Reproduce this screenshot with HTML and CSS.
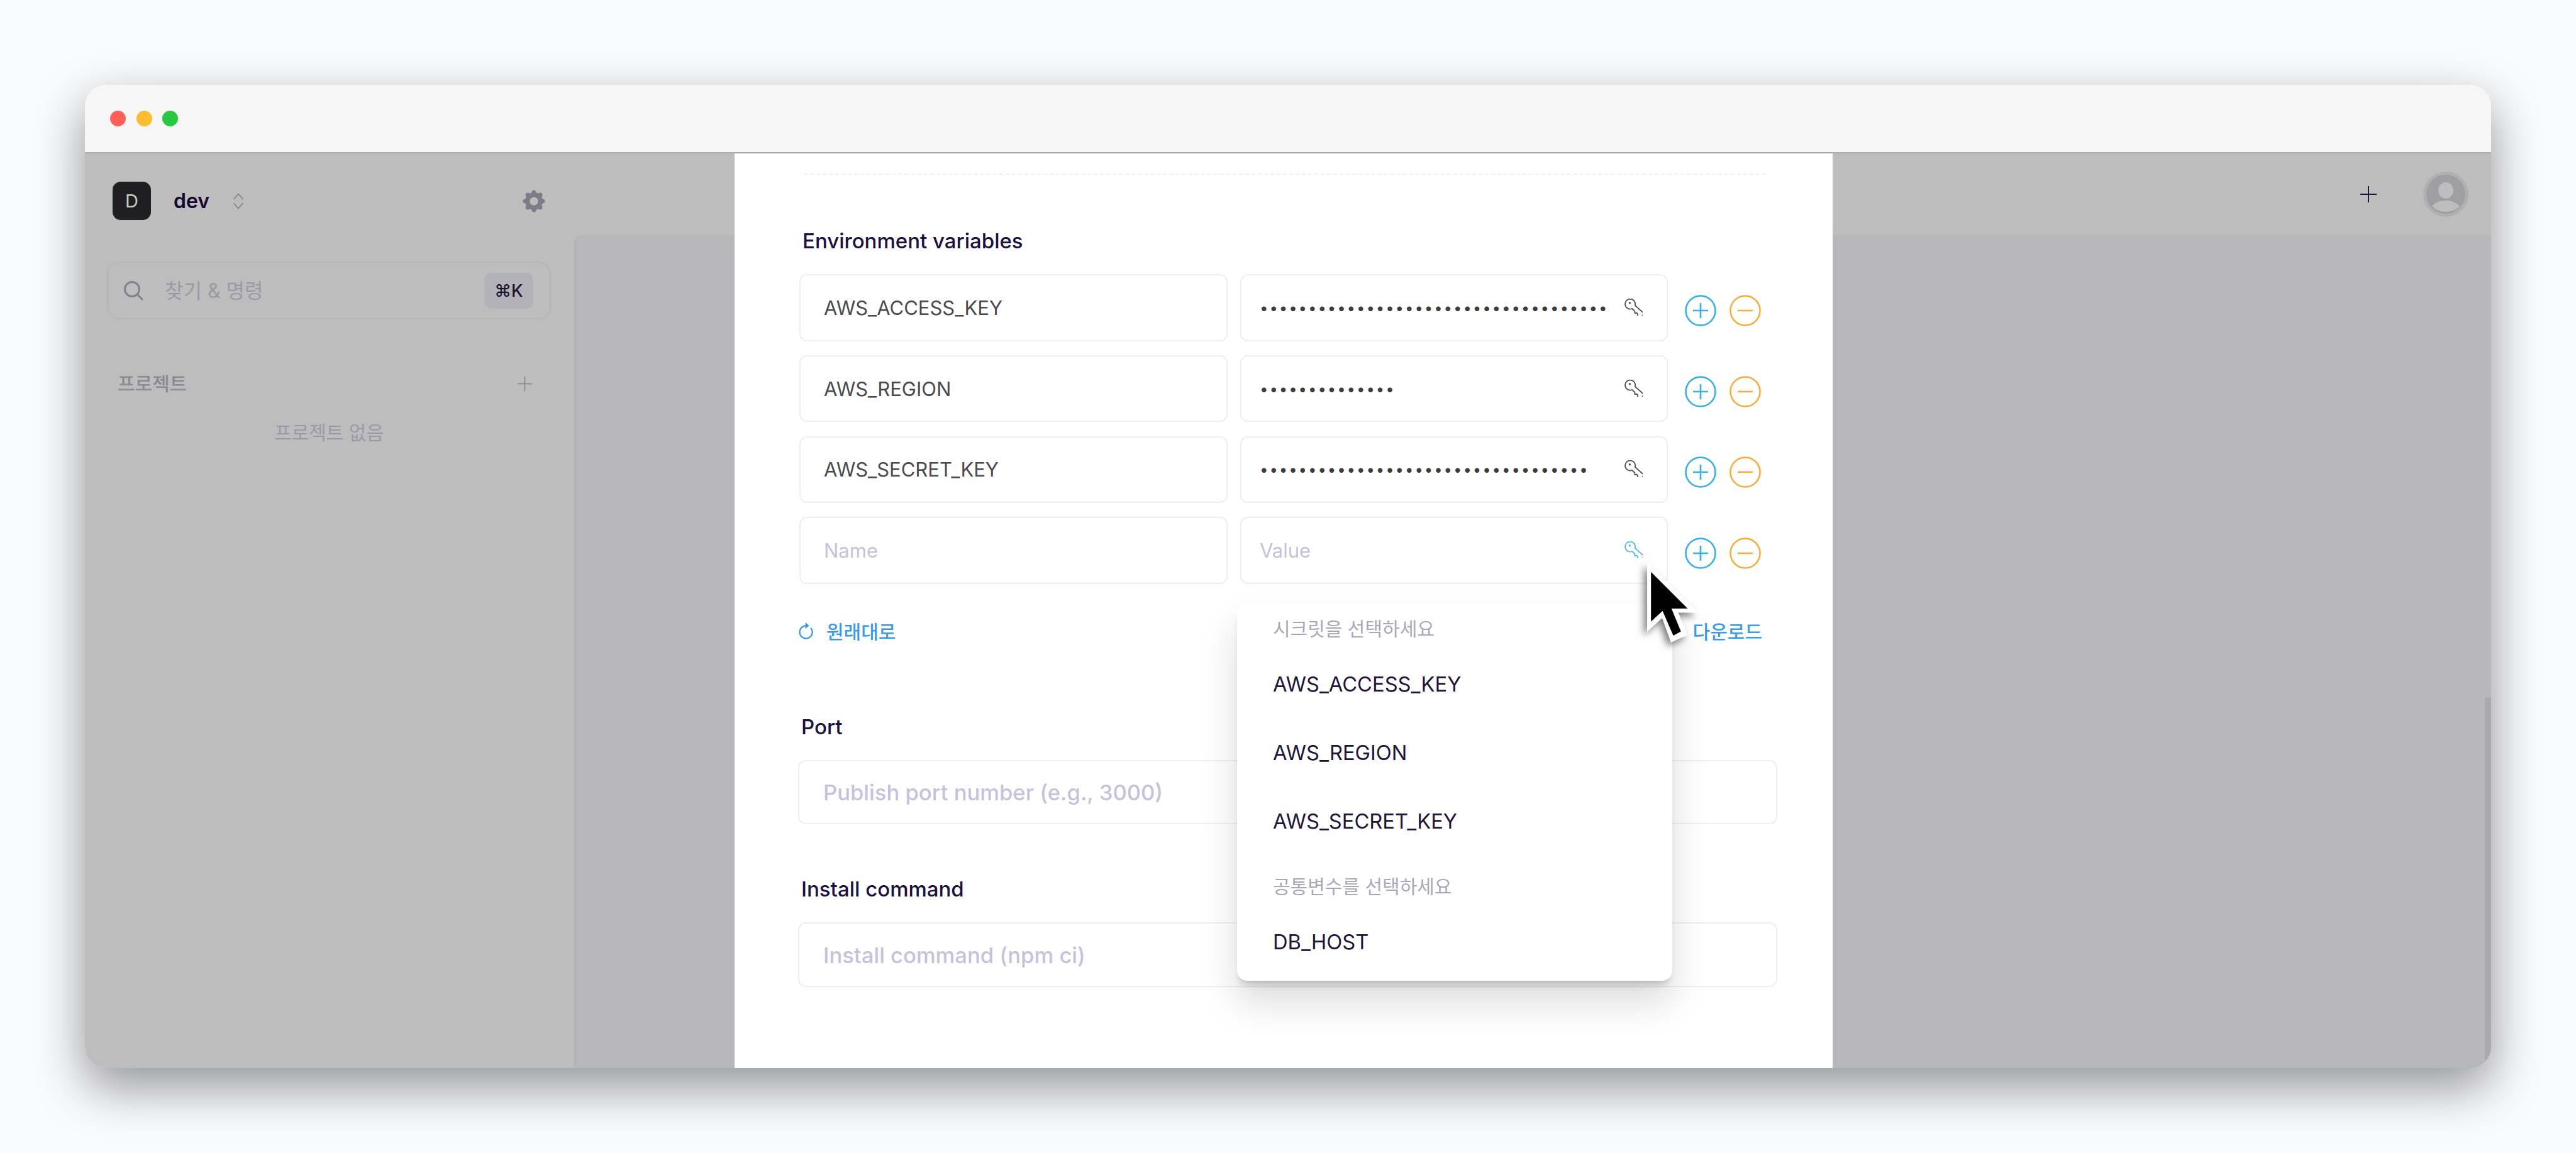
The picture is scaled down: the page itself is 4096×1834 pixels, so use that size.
FILE: index.html
```html
<!DOCTYPE html>
<html lang="ko">
<head>
    <meta charset="UTF-8">
    <title>dev</title>
    <link rel="stylesheet" href="styles.css">
</head>
<body>
    <div class="window">
        <div class="titlebar">
            <span class="light light-red"></span>
            <span class="light light-yellow"></span>
            <span class="light light-green"></span>
        </div>

        <div class="window-body">
            <aside class="sidebar">
                <div class="team">
                    <div class="team-badge">D</div>
                    <div class="team-name">dev</div>
                    <svg class="team-switch" viewBox="0 0 20 26" fill="none" stroke="#7f7f8b" stroke-width="1.6">
                        <path d="M2.5 10 10 1.5 17.5 10"/>
                        <path d="M2.5 16 10 24.5 17.5 16"/>
                    </svg>
                    <svg class="team-gear" viewBox="0 0 20 20" fill="#7d7d8a">
                        <path fill-rule="evenodd" d="M11.49 3.17c-.38-1.56-2.6-1.56-2.98 0a1.532 1.532 0 01-2.286.948c-1.372-.836-2.942.734-2.106 2.106.54.886.061 2.042-.947 2.287-1.561.379-1.561 2.6 0 2.978a1.532 1.532 0 01.947 2.287c-.836 1.372.734 2.942 2.106 2.106a1.532 1.532 0 012.287.947c.379 1.561 2.6 1.561 2.978 0a1.533 1.533 0 012.287-.947c1.372.836 2.942-.734 2.106-2.106a1.533 1.533 0 01.947-2.287c1.561-.379 1.561-2.6 0-2.978a1.532 1.532 0 01-.947-2.287c.836-1.372-.734-2.942-2.106-2.106a1.532 1.532 0 01-2.287-.947zM10 13a3 3 0 100-6 3 3 0 000 6z"/>
                    </svg>
                </div>

                <div class="search">
                    <svg class="search-icon" viewBox="0 0 32 32" fill="none" stroke="#81818e" stroke-width="3" stroke-linecap="round">
                        <circle cx="14" cy="14" r="11.5"/>
                        <path d="M22.5 22.5 30 30"/>
                    </svg>
                    <span class="search-text">찾기 &amp; 명령</span>
                    <span class="search-key">⌘K</span>
                </div>

                <div class="project-head">
                    <span class="project-title">프로젝트</span>
                    <svg class="project-add" viewBox="0 0 26 26" stroke="#81818e" stroke-width="1.6">
                        <path d="M13 1v24M1 13h24"/>
                    </svg>
                </div>
                <div class="project-empty">프로젝트 없음</div>
            </aside>

            <main class="main">
                <div class="topbar">
                    <svg class="topbar-add" viewBox="0 0 26 26" stroke="#1c1738" stroke-width="2">
                        <path d="M13 0v26M0 13h26"/>
                    </svg>
                    <svg class="avatar" viewBox="0 0 72 72">
                        <circle cx="36" cy="36" r="36" fill="#b0b0b3"/>
                        <circle cx="36" cy="36" r="31" fill="#9e9fa3"/>
                        <ellipse cx="36" cy="30" rx="12" ry="13" fill="#bdbdbd"/>
                        <path d="M14 55c5-6 13-9 22-9s17 3 22 9c-6 6-14 9-22 9s-16-3-22-9z" fill="#bdbdbd"/>
                    </svg>
                </div>
                <div class="content">
                    <div class="scrollbar"></div>
                </div>
            </main>

            <section class="modal">
                <div class="divider"></div>

                <div class="label label-env">Environment variables</div>

                <div class="env-rows">
                    <div class="env-row">
                        <div class="field field-name">AWS_ACCESS_KEY</div>
                        <div class="field field-value">
                            <span class="dots">••••••••••••••••••••••••••••••••••••</span>
                            <svg class="key" viewBox="0 0 34 32"><use href="#key-shape"/></svg>
                        </div>
                        <svg class="round-btn" viewBox="0 0 50 50"><use href="#btn-plus"/></svg>
                        <svg class="round-btn" viewBox="0 0 50 50"><use href="#btn-minus"/></svg>
                    </div>
                    <div class="env-row">
                        <div class="field field-name">AWS_REGION</div>
                        <div class="field field-value">
                            <span class="dots">••••••••••••••</span>
                            <svg class="key" viewBox="0 0 34 32"><use href="#key-shape"/></svg>
                        </div>
                        <svg class="round-btn" viewBox="0 0 50 50"><use href="#btn-plus"/></svg>
                        <svg class="round-btn" viewBox="0 0 50 50"><use href="#btn-minus"/></svg>
                    </div>
                    <div class="env-row">
                        <div class="field field-name">AWS_SECRET_KEY</div>
                        <div class="field field-value">
                            <span class="dots">••••••••••••••••••••••••••••••••••</span>
                            <svg class="key" viewBox="0 0 34 32"><use href="#key-shape"/></svg>
                        </div>
                        <svg class="round-btn" viewBox="0 0 50 50"><use href="#btn-plus"/></svg>
                        <svg class="round-btn" viewBox="0 0 50 50"><use href="#btn-minus"/></svg>
                    </div>
                    <div class="env-row">
                        <div class="field field-name is-empty">Name</div>
                        <div class="field field-value is-empty">
                            <span>Value</span>
                            <svg class="key key-active" viewBox="0 0 34 32"><use href="#key-shape"/></svg>
                        </div>
                        <svg class="round-btn" viewBox="0 0 50 50"><use href="#btn-plus"/></svg>
                        <svg class="round-btn" viewBox="0 0 50 50"><use href="#btn-minus"/></svg>
                    </div>
                </div>

                <div class="env-actions">
                    <div class="link">
                        <svg class="link-icon" viewBox="0 0 26 30" fill="none" stroke="#3b9be6" stroke-width="2.4">
                            <path d="M13 7.5A10.5 10.5 0 1 0 21 11"/>
                            <path d="M12 2 18.5 7.5 12 12.5z" fill="#3b9be6" stroke="none"/>
                        </svg>
                        <span>원래대로</span>
                    </div>
                    <div class="link">
                        <span>다운로드</span>
                    </div>
                </div>

                <div class="label label-port">Port</div>
                <div class="input">Publish port number (e.g., 3000)</div>

                <div class="label label-install">Install command</div>
                <div class="input">Install command (npm ci)</div>

                <div class="dropdown">
                    <div class="dropdown-title">시크릿을 선택하세요</div>
                    <div class="dropdown-item">AWS_ACCESS_KEY</div>
                    <div class="dropdown-item">AWS_REGION</div>
                    <div class="dropdown-item">AWS_SECRET_KEY</div>
                    <div class="dropdown-title dropdown-title-next">공통변수를 선택하세요</div>
                    <div class="dropdown-item">DB_HOST</div>
                </div>

                <svg class="cursor" viewBox="0 0 90 136">
                    <path class="cursor-edge" d="M4 4V115L28 93 42 132 68 120 53.5 84.6H85.5z"/>
                    <path d="M10.2 19.8V98.8L28.6 81.8 45.6 120.9 57.8 114.4 42.8 77.9H68.5z"/>
                </svg>
            </section>
        </div>
    </div>

    <svg class="defs" width="0" height="0">
        <defs>
            <g id="key-shape" fill="none" stroke="currentColor" stroke-width="2.2">
                <g transform="translate(11 10.5) rotate(42)">
                    <path d="M8 -4.2A9.5 9.5 0 1 0 8 4.2H15L17.5 7 20 4.2H22L24 6.5H28.5L31 3.6V-1.5L29 -4.2z" stroke-linejoin="round"/>
                    <circle cx="-2.5" cy="-1" r="2" fill="currentColor" stroke="none"/>
                </g>
            </g>
            <g id="btn-plus" fill="none" stroke="#38aeea" stroke-width="2.6">
                <circle cx="25" cy="25" r="23.5"/>
                <path d="M25 13v24M13 25h24"/>
            </g>
            <g id="btn-minus" fill="none" stroke="#f4ae3d" stroke-width="2.6">
                <circle cx="25" cy="25" r="23.5"/>
                <path d="M13 25h24"/>
            </g>
        </defs>
    </svg>
</body>
</html>
```

FILE: styles.css
```css
html, body {
    margin: 0;
    height: 100%;
}

body {
    background: #fafbfd;
    font-family: Inter, "Noto Sans CJK KR", sans-serif;
    padding: 135px 0 0 135px;
    box-sizing: border-box;
    overflow: hidden;
}

.defs {
    position: absolute;
}

.window {
    width: 3826px;
    height: 1564px;
    border-radius: 34px;
    overflow: hidden;
    box-shadow: 0 30px 80px rgba(0, 0, 0, 0.42);
    display: flex;
    flex-direction: column;
}

.titlebar {
    height: 109px;
    background: #f6f6f6;
    border-bottom: 2px solid #ababab;
    box-sizing: border-box;
    display: flex;
    align-items: center;
    gap: 16.5px;
    padding-left: 40px;
    flex-shrink: 0;
}

.light {
    width: 25px;
    height: 25px;
    border-radius: 50%;
}

.light-red { background: #ff5f57; }
.light-yellow { background: #febc2e; }
.light-green { background: #28c840; }

.window-body {
    flex: 1;
    display: flex;
    position: relative;
    background: #bdbdbd;
}

/* sidebar */
.sidebar {
    width: 778px;
    box-sizing: border-box;
    padding: 45px 37px 0 35px;
    flex-shrink: 0;
}

.team {
    display: flex;
    align-items: center;
    padding-left: 9px;
}

.team-badge {
    width: 61px;
    height: 61px;
    border-radius: 13px;
    background: #1f1f22;
    color: #c6c6c6;
    font-size: 29px;
    display: flex;
    align-items: center;
    justify-content: center;
}

.team-name {
    margin-left: 36px;
    font-size: 32px;
    font-weight: 600;
    color: #15082f;
}

.team-switch {
    margin-left: 36px;
    width: 20px;
    height: 26px;
}

.team-gear {
    margin-left: auto;
    margin-right: 5px;
    width: 44px;
    height: 44px;
}

.search {
    margin-top: 66px;
    height: 92px;
    box-sizing: border-box;
    border: 2px solid #b6b6b6;
    border-radius: 20px;
    display: flex;
    align-items: center;
    padding: 0 26px 0 24px;
}

.search-icon {
    width: 32px;
    height: 32px;
}

.search-text {
    margin: -4px 0 0 34px;
    font-size: 32px;
    color: #9a9aa6;
}

.search-key {
    margin-left: auto;
    width: 78px;
    height: 57px;
    border-radius: 12px;
    background: #b2b2b8;
    color: #1d1530;
    font-size: 27px;
    font-weight: 500;
    display: flex;
    align-items: center;
    justify-content: center;
}

.project-head {
    margin-top: 82px;
    height: 40px;
    padding: 0 29px 0 17px;
    display: flex;
    align-items: center;
    justify-content: space-between;
    font-size: 30px;
    font-weight: 500;
    color: #8a8a96;
}

.project-title {
    margin-top: -4px;
}

.project-add {
    width: 25px;
    height: 25px;
}

.project-empty {
    margin-top: 40px;
    height: 40px;
    line-height: 37px;
    text-align: center;
    font-size: 30px;
    color: #9b9ba8;
}

/* main area */
.main {
    flex: 1;
    display: flex;
    flex-direction: column;
}

.topbar {
    height: 130px;
    flex-shrink: 0;
    display: flex;
    align-items: center;
    justify-content: flex-end;
    gap: 74px;
    padding-right: 36px;
}

.topbar-add {
    width: 26px;
    height: 26px;
}

.avatar {
    width: 72px;
    height: 72px;
}

.content {
    flex: 1;
    background: #b7b7b9;
    border-top-left-radius: 14px;
    border-left: 2px solid #b3b3b4;
    display: flex;
    justify-content: flex-end;
    padding-top: 735px;
}

.scrollbar {
    width: 10px;
    background: #aaaaac;
    border-top-left-radius: 5px;
}

/* modal */
.modal {
    position: absolute;
    left: 1033px;
    top: 0;
    bottom: 0;
    width: 1746px;
    box-sizing: border-box;
    padding: 32px 90px 0 103px;
    background: #fff;
}

.divider {
    margin: 0 16px 0 7px;
    border-top: 2px dashed #f0f0f3;
}

.label {
    height: 40px;
    line-height: 40px;
    font-size: 33px;
    font-weight: 500;
    color: #1c1040;
    padding-left: 3px;
}

.label-env { margin-top: 85px; padding-left: 5px; }
.label-port { margin-top: 113px; }
.label-install { margin-top: 83px; }

.env-rows {
    margin-top: 33px;
    display: flex;
    flex-direction: column;
    gap: 22.3px;
}

.env-row {
    display: flex;
    align-items: center;
}

.field {
    height: 106.5px;
    box-sizing: border-box;
    border: 2px solid #efeff2;
    border-radius: 12px;
    display: flex;
    align-items: center;
    font-size: 31px;
    color: #4a4a4a;
}

.field-name {
    width: 680.5px;
    padding-left: 37px;
}

.field-value {
    width: 680px;
    margin-left: 20.5px;
    padding: 0 38px 0 29px;
    justify-content: space-between;
}

.is-empty {
    color: #c5c3dc;
}

.dots {
    font-size: 24px;
    letter-spacing: 1.9px;
    color: #3c3c3c;
}

.key {
    width: 29px;
    height: 27px;
    color: #555;
    flex-shrink: 0;
    margin-top: -2px;
}

.key-active {
    color: #56bdea;
}

.round-btn {
    width: 50px;
    height: 50px;
    flex-shrink: 0;
    margin-left: 21px;
    margin-top: 9px;
}

.field + .round-btn {
    margin-left: 27px;
}

.env-actions {
    margin: 54px 22px 0 -2px;
    display: flex;
    justify-content: space-between;
}

.link {
    height: 40px;
    display: flex;
    align-items: center;
    gap: 20px;
    font-size: 30px;
    font-weight: 500;
    color: #3b9be6;
}

.link-icon {
    width: 25px;
    height: 29px;
}

.input {
    margin: 33px -2px 0 -2px;
    height: 102.5px;
    box-sizing: border-box;
    border: 2px solid #efeff2;
    border-radius: 12px;
    display: flex;
    align-items: center;
    padding-left: 38px;
    font-size: 34.6px;
    font-weight: 500;
    color: #c5c3dc;
}

.dropdown {
    position: absolute;
    left: 799px;
    top: 716px;
    width: 692px;
    height: 600px;
    box-sizing: border-box;
    padding: 20px 57px 0;
    background: #fff;
    border-radius: 16px;
    box-shadow: 0 10px 12px -5px rgba(0, 0, 0, 0.2), 0 34px 60px rgba(0, 0, 0, 0.14);
}

.dropdown-title {
    height: 40px;
    line-height: 40px;
    font-size: 30px;
    color: #a9a8b8;
}

.dropdown-title-next { margin-top: 30px; }

.dropdown-item {
    height: 109px;
    display: flex;
    align-items: center;
    font-size: 32.7px;
    color: #1f1538;
}

.dropdown-title + .dropdown-item { margin-top: 13px; }

.cursor {
    position: absolute;
    left: 1447px;
    top: 646px;
    width: 90px;
    height: 136px;
    filter: drop-shadow(-5px 6px 6px rgba(0, 0, 0, 0.5));
}

.cursor-edge {
    fill: #fff;
}
```
